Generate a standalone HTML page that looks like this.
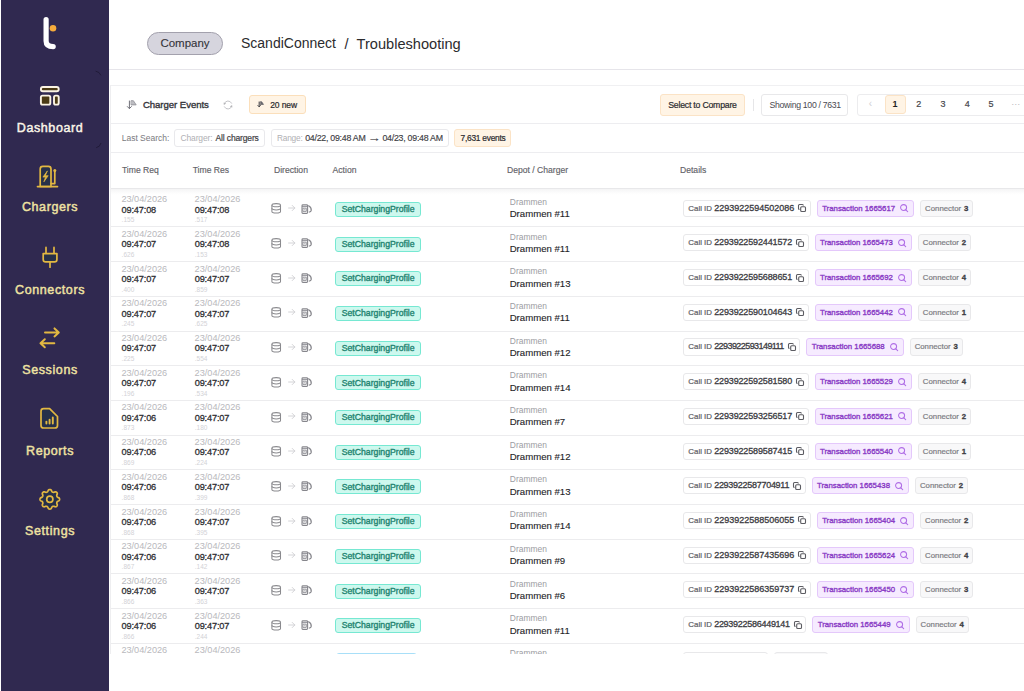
<!DOCTYPE html><html><head><meta charset="utf-8"><style>
*{box-sizing:border-box;margin:0;padding:0}
html,body{width:1024px;height:691px;overflow:hidden;background:#fff;font-family:"Liberation Sans",sans-serif;position:relative}
.abs{position:absolute}
.t{position:absolute;white-space:nowrap}
svg{position:absolute;overflow:visible}
#side{position:absolute;left:1px;top:0;width:108px;height:691px;background:#302950}
#clip{position:absolute;left:110px;top:85px;width:914px;height:569px;overflow:hidden}
.cid,.trx,.con{position:relative;height:17.2px;border:1px solid #e8e8ea;border-radius:3px;white-space:nowrap;line-height:15.2px}
.cid{background:#fff;font-size:7.9px;color:#5e5e64;-webkit-text-stroke:0.2px #5e5e64;padding:0 15.6px 0 4.3px}
.cid b{font-size:9px;color:#3c3c42;font-weight:normal;-webkit-text-stroke:0.3px #3c3c42;letter-spacing:0.05px}
.cp{position:absolute;right:3.5px;top:3.6px;width:8px;height:8px}
.trx{background:#f6ebff;border-color:#e4c8fb;color:#8a3cc6;font-size:7.8px;-webkit-text-stroke:0.35px #8a3cc6;padding:0 18px 0 4.4px;letter-spacing:0px}
.sr{position:absolute;right:4.6px;top:3.7px;width:8.2px;height:8px}
.n1{margin:0 -1.1px}
.con{background:#f8f8f9;color:#7c7c82;-webkit-text-stroke:0.2px #7c7c82;font-size:7.8px;padding:0 4.2px 0 4.1px}
.con b{color:#3e3e44;margin-left:0.7px;-webkit-text-stroke:0.3px #3e3e44}
</style></head><body>
<div id="side"></div>
<svg style="left:0;top:0" width="108" height="60"><path d="M46.1 19.5 V41 Q46.1 46.6 53.2 46.6" fill="none" stroke="#fff" stroke-width="5.2" stroke-linecap="round"/><circle cx="53" cy="28.3" r="3.3" fill="#f6ab3c"/></svg>
<svg style="left:0;top:0" width="108" height="120"><g fill="#4b3a14" stroke="#fbf3e3" stroke-width="1.9"><rect x="40.9" y="87" width="17.8" height="4.3" rx="2"/><rect x="40.9" y="95.6" width="9.4" height="9" rx="1.6"/><rect x="54" y="95.6" width="4.7" height="9" rx="1.6"/></g></svg>
<svg style="left:0;top:0" width="108" height="200"><g stroke="#e2b842" stroke-width="1.7" fill="none" stroke-linecap="round" stroke-linejoin="round"><path d="M40.2 186.5 V169 Q40.2 166.4 42.8 166.4 H48.4 Q51 166.4 51 169 V186.5 Z" fill="#26304a"/><path d="M37.5 186.6 H57.5"/><path d="M51 183.6 H54.8 V170.8"/><path d="M47.2 171.2 L42.9 177.1 H45.5 L43.9 181.8 L48.2 175.7 H45.6 Z" fill="#e2b842" stroke-width="0.7"/></g><circle cx="54.8" cy="170.4" r="1.5" fill="#e2b842"/></svg>
<svg style="left:0;top:0" width="108" height="280"><g stroke="#e2b842" stroke-width="1.7" fill="none" stroke-linecap="round" stroke-linejoin="round"><path d="M46 247.4 V253.4 M54 247.4 V253.4"/><path d="M43.2 253.6 H56.9 V259.5 Q56.9 261.9 54.5 261.9 H45.6 Q43.2 261.9 43.2 259.5 Z" fill="#26304a"/><path d="M50 262 V267.2"/></g></svg>
<svg style="left:0;top:0" width="108" height="360"><g stroke="#e2b842" stroke-width="2" fill="none" stroke-linecap="round" stroke-linejoin="round"><path d="M45 332.4 H58.6 M54.5 328.4 L58.8 332.4 L54.5 336.4"/><path d="M54.3 343.2 H40.7 M44.8 339.2 L40.5 343.2 L44.8 347.2"/></g></svg>
<svg style="left:0;top:0" width="108" height="440"><path d="M43.6 408.6 H49.6 L57.5 416.5 V425.4 Q57.5 428 54.9 428 H43.6 Q41 428 41 425.4 V411.2 Q41 408.6 43.6 408.6 Z" fill="#26304a" stroke="#e2b842" stroke-width="1.7" stroke-linejoin="round"/><g stroke="#e2b842" stroke-width="1.9" stroke-linecap="round"><path d="M46.4 423.6 V421.6 M49.6 423.6 V419.6 M52.8 423.6 V417.4"/></g></svg>
<svg style="left:0;top:0" width="108" height="520"><path d="M49.80 489.50 L50.18 489.54 L50.56 489.66 L50.92 489.85 L51.25 490.15 L51.51 490.72 L51.72 491.30 L51.97 491.61 L52.22 491.86 L52.48 492.05 L52.75 492.19 L53.04 492.28 L53.35 492.33 L53.70 492.33 L54.10 492.28 L54.66 492.02 L55.25 491.80 L55.69 491.83 L56.08 491.94 L56.43 492.13 L56.73 492.37 L56.97 492.67 L57.16 493.02 L57.27 493.41 L57.30 493.85 L57.08 494.44 L56.82 495.00 L56.77 495.40 L56.77 495.75 L56.82 496.06 L56.91 496.35 L57.05 496.62 L57.24 496.88 L57.49 497.13 L57.80 497.38 L58.38 497.59 L58.95 497.85 L59.25 498.18 L59.44 498.54 L59.56 498.92 L59.60 499.30 L59.56 499.68 L59.44 500.06 L59.25 500.42 L58.95 500.75 L58.38 501.01 L57.80 501.22 L57.49 501.47 L57.24 501.72 L57.05 501.98 L56.91 502.25 L56.82 502.54 L56.77 502.85 L56.77 503.20 L56.82 503.60 L57.08 504.16 L57.30 504.75 L57.27 505.19 L57.16 505.58 L56.97 505.93 L56.73 506.23 L56.43 506.47 L56.08 506.66 L55.69 506.77 L55.25 506.80 L54.66 506.58 L54.10 506.32 L53.70 506.27 L53.35 506.27 L53.04 506.32 L52.75 506.41 L52.48 506.55 L52.22 506.74 L51.97 506.99 L51.72 507.30 L51.51 507.88 L51.25 508.45 L50.92 508.75 L50.56 508.94 L50.18 509.06 L49.80 509.10 L49.42 509.06 L49.04 508.94 L48.68 508.75 L48.35 508.45 L48.09 507.88 L47.88 507.30 L47.63 506.99 L47.38 506.74 L47.12 506.55 L46.85 506.41 L46.56 506.32 L46.25 506.27 L45.90 506.27 L45.50 506.32 L44.94 506.58 L44.35 506.80 L43.91 506.77 L43.52 506.66 L43.17 506.47 L42.87 506.23 L42.63 505.93 L42.44 505.58 L42.33 505.19 L42.30 504.75 L42.52 504.16 L42.78 503.60 L42.83 503.20 L42.83 502.85 L42.78 502.54 L42.69 502.25 L42.55 501.98 L42.36 501.72 L42.11 501.47 L41.80 501.22 L41.22 501.01 L40.65 500.75 L40.35 500.42 L40.16 500.06 L40.04 499.68 L40.00 499.30 L40.04 498.92 L40.16 498.54 L40.35 498.18 L40.65 497.85 L41.22 497.59 L41.80 497.38 L42.11 497.13 L42.36 496.88 L42.55 496.62 L42.69 496.35 L42.78 496.06 L42.83 495.75 L42.83 495.40 L42.78 495.00 L42.52 494.44 L42.30 493.85 L42.33 493.41 L42.44 493.02 L42.63 492.67 L42.87 492.37 L43.17 492.13 L43.52 491.94 L43.91 491.83 L44.35 491.80 L44.94 492.02 L45.50 492.28 L45.90 492.33 L46.25 492.33 L46.56 492.28 L46.85 492.19 L47.12 492.05 L47.38 491.86 L47.63 491.61 L47.88 491.30 L48.09 490.72 L48.35 490.15 L48.68 489.85 L49.04 489.66 L49.42 489.54 Z" fill="#26304a" stroke="#e2b842" stroke-width="1.7" stroke-linejoin="round"/><circle cx="49.8" cy="499.3" r="3.1" fill="none" stroke="#e2b842" stroke-width="1.7"/></svg>
<svg style="left:0;top:0" width="108" height="160"><g fill="none" stroke="#1f1a36" stroke-width="0.9" stroke-linecap="round"><path d="M96 71.2 Q99.6 71.8 100.8 75"/><path d="M96.6 147.6 Q100 147 100.9 143.4"/></g></svg>
<div class="t" style="left:0.00px;top:121.06px;font-size:12.5px;line-height:15.62px;width:100.1px;text-align:center;letter-spacing:0.6px;-webkit-text-stroke:0.45px #fbf5e8;color:#fbf5e8">Dashboard</div>
<div class="t" style="left:0.00px;top:199.86px;font-size:12.5px;line-height:15.62px;width:100.1px;text-align:center;letter-spacing:0.6px;-webkit-text-stroke:0.45px #efe2a2;color:#efe2a2">Chargers</div>
<div class="t" style="left:0.00px;top:282.86px;font-size:12.5px;line-height:15.62px;width:100.1px;text-align:center;letter-spacing:0.6px;-webkit-text-stroke:0.45px #efe2a2;color:#efe2a2">Connectors</div>
<div class="t" style="left:0.00px;top:362.86px;font-size:12.5px;line-height:15.62px;width:100.1px;text-align:center;letter-spacing:0.6px;-webkit-text-stroke:0.45px #efe2a2;color:#efe2a2">Sessions</div>
<div class="t" style="left:0.00px;top:444.06px;font-size:12.5px;line-height:15.62px;width:100.1px;text-align:center;letter-spacing:0.6px;-webkit-text-stroke:0.45px #efe2a2;color:#efe2a2">Reports</div>
<div class="t" style="left:0.00px;top:523.96px;font-size:12.5px;line-height:15.62px;width:100.1px;text-align:center;letter-spacing:0.6px;-webkit-text-stroke:0.45px #efe2a2;color:#efe2a2">Settings</div>
<div class="abs" style="left:147.00px;top:32.00px;width:76.00px;height:23.00px;border:1px solid #a3a1ad;background:#d6d5de;border-radius:12px"></div>
<div class="t" style="left:147.00px;top:35.53px;font-size:11.5px;line-height:14.38px;width:76px;text-align:center;color:#333339;-webkit-text-stroke:0.1px #333339">Company</div>
<div class="t" style="left:241.00px;top:35.10px;font-size:14.0px;line-height:17.5px;color:#2b2b2e">ScandiConnect</div>
<div class="t" style="left:344.60px;top:34.52px;font-size:14.6px;line-height:18.25px;color:#2b2b2e">/</div>
<div class="t" style="left:356.60px;top:34.52px;font-size:14.6px;line-height:18.25px;color:#2b2b2e">Troubleshooting</div>
<div class="abs" style="left:109.00px;top:69.00px;width:915.00px;height:1.00px;background:#e6e5ea"></div>
<div id="clip">
<div class="abs" style="left:0.00px;top:37.60px;width:914.00px;height:1.00px;background:#ededf0"></div>
<svg style="left:16.00px;top:15.00px" width="11" height="10" viewBox="0 0 11 10"><g stroke-linecap="round" stroke-linejoin="round"><path d="M3.4 1 V8.4 M1.4 6.6 L3.4 8.6 L5.4 6.6" fill="none" stroke="#707078" stroke-width="1"/><path d="M5.4 0.7 H7.4 L10.2 4.9 H5.4 Z" fill="#bdbdc2" stroke="#8e8e96" stroke-width="0.8"/></g></svg>
<div class="t" style="left:32.90px;top:13.97px;font-size:9.6px;line-height:12.0px;color:#34343a;letter-spacing:-0.05px;-webkit-text-stroke:0.35px #34343a">Charger Events</div>
<svg style="left:112.50px;top:14.50px" width="10" height="10" viewBox="0 0 10 10"><g fill="none" stroke="#c4c4c8" stroke-width="1" stroke-linecap="round"><path d="M1.3 3.6 A4 4 0 0 1 8.6 3.2"/><path d="M8.7 6.4 A4 4 0 0 1 1.4 6.8"/></g><path d="M0.6 2.4 L3.2 3.6 L0.9 5 Z" fill="#b4b4b8"/><path d="M9.4 7.6 L6.8 6.4 L9.1 5 Z" fill="#b4b4b8"/></svg>
<div class="abs" style="left:139.10px;top:10.40px;width:57.00px;height:18.50px;background:#fff4e5;border:1px solid #fbdfbb;border-radius:3px"></div>
<svg style="left:147.20px;top:16.20px" width="7" height="7" viewBox="0 0 11 10"><g stroke-linecap="round" stroke-linejoin="round"><path d="M3.4 1 V8.4 M1.4 6.6 L3.4 8.6 L5.4 6.6" fill="none" stroke="#3a3a40" stroke-width="1.5"/><path d="M5.4 0.7 H7.4 L10.2 4.9 H5.4 Z" fill="#6a6a70" stroke="#55555c" stroke-width="1"/></g></svg>
<div class="t" style="left:160.20px;top:14.54px;font-size:8.5px;line-height:10.62px;color:#2a2a2e;letter-spacing:-0.1px;-webkit-text-stroke:0.2px #2a2a2e">20 new</div>
<div class="abs" style="left:549.80px;top:8.80px;width:85.50px;height:22.00px;background:#fff4e5;border:1px solid #fbe3c6;border-radius:3px"></div>
<div class="t" style="left:558.20px;top:15.15px;font-size:8.7px;line-height:10.88px;color:#2a2a2e;letter-spacing:-0.2px;-webkit-text-stroke:0.2px #2a2a2e">Select to Compare</div>
<div class="abs" style="left:642.50px;top:13.80px;width:1.00px;height:12.50px;background:#e6e6e8"></div>
<div class="abs" style="left:651.30px;top:8.80px;width:87.00px;height:22.00px;background:#fff;border:1px solid #e8e8ea;border-radius:3px"></div>
<div class="t" style="left:659.50px;top:15.15px;font-size:8.7px;line-height:10.88px;color:#4a4a50;letter-spacing:-0.3px">Showing 100 / 7631</div>
<div class="abs" style="left:747.10px;top:9.20px;width:200.00px;height:21.50px;background:#fff;border:1px solid #ececee;border-radius:3px"></div>
<div class="t" style="left:758.80px;top:13.29px;font-size:10px;line-height:12.5px;color:#cfcfd4">&lsaquo;</div>
<div class="abs" style="left:774.50px;top:10.20px;width:21.60px;height:18.70px;background:#fff4e5;border:1px solid #fbe3c6;border-radius:3px"></div>
<div class="t" style="left:779.00px;top:14.36px;font-size:9px;line-height:11.25px;text-align:center;width:12px;color:#1e1e22;font-weight:bold">1</div>
<div class="t" style="left:802.80px;top:14.36px;font-size:9px;line-height:11.25px;text-align:center;width:12px;color:#46464c;-webkit-text-stroke:0.2px #46464c">2</div>
<div class="t" style="left:827.10px;top:14.36px;font-size:9px;line-height:11.25px;text-align:center;width:12px;color:#46464c;-webkit-text-stroke:0.2px #46464c">3</div>
<div class="t" style="left:851.20px;top:14.36px;font-size:9px;line-height:11.25px;text-align:center;width:12px;color:#46464c;-webkit-text-stroke:0.2px #46464c">4</div>
<div class="t" style="left:875.00px;top:14.36px;font-size:9px;line-height:11.25px;text-align:center;width:12px;color:#46464c;-webkit-text-stroke:0.2px #46464c">5</div>
<div class="t" style="left:901.30px;top:13.86px;font-size:9px;line-height:11.25px;color:#b8b8bc">&middot;&middot;&middot;</div>
<div class="abs" style="left:0.00px;top:67.00px;width:914.00px;height:1.00px;background:#ededf0"></div>
<div class="t" style="left:11.70px;top:47.84px;font-size:8.5px;line-height:10.62px;color:#7a7a80">Last Search:</div>
<div class="abs" style="left:64.20px;top:44.20px;width:90.70px;height:17.50px;background:#fff;border:1px solid #e9e9ec;border-radius:3px"></div>
<div class="t" style="left:70.50px;top:47.84px;font-size:8.5px;line-height:10.62px;color:#b0b0b4;letter-spacing:-0.15px">Charger:</div>
<div class="t" style="left:105.60px;top:47.84px;font-size:8.5px;line-height:10.62px;color:#3e3e44;letter-spacing:-0.15px;-webkit-text-stroke:0.2px #3e3e44">All chargers</div>
<div class="abs" style="left:160.60px;top:44.20px;width:178.00px;height:17.50px;background:#fff;border:1px solid #e9e9ec;border-radius:3px"></div>
<div class="t" style="left:167.00px;top:48.03px;font-size:8.3px;line-height:10.38px;color:#b0b0b4;letter-spacing:-0.2px">Range:</div>
<div class="t" style="left:195.20px;top:47.55px;font-size:8.8px;line-height:11.0px;color:#3e3e44;letter-spacing:-0.25px;-webkit-text-stroke:0.15px #3e3e44">04/22, 09:48 AM <span style="display:inline-block;transform:scaleX(1.5);margin:0 2px">&rarr;</span> 04/23, 09:48 AM</div>
<div class="abs" style="left:344.20px;top:44.20px;width:57.00px;height:17.50px;background:#fff4e5;border:1px solid #fbe3c6;border-radius:3px"></div>
<div class="t" style="left:350.50px;top:47.94px;font-size:8.4px;line-height:10.5px;color:#2a2a2e;letter-spacing:-0.25px;-webkit-text-stroke:0.2px #2a2a2e">7,631 events</div>
<div class="abs" style="left:0.00px;top:103.00px;width:914.00px;height:1.00px;background:#e8e8ea"></div>
<div class="abs" style="left:0.00px;top:104.00px;width:914.00px;height:6.00px;background:linear-gradient(#f4f4f5,#fdfdfd 70%,rgba(255,255,255,0))"></div>
<div class="t" style="left:11.90px;top:79.85px;font-size:8.6px;line-height:10.75px;color:#626268;-webkit-text-stroke:0.15px #626268">Time Req</div>
<div class="t" style="left:82.70px;top:79.85px;font-size:8.6px;line-height:10.75px;color:#626268;-webkit-text-stroke:0.15px #626268">Time Res</div>
<div class="t" style="left:164.00px;top:79.85px;font-size:8.6px;line-height:10.75px;color:#626268;-webkit-text-stroke:0.15px #626268">Direction</div>
<div class="t" style="left:222.60px;top:79.85px;font-size:8.6px;line-height:10.75px;color:#626268;-webkit-text-stroke:0.15px #626268">Action</div>
<div class="t" style="left:397.00px;top:79.85px;font-size:8.6px;line-height:10.75px;color:#626268;-webkit-text-stroke:0.15px #626268">Depot / Charger</div>
<div class="t" style="left:570.00px;top:79.85px;font-size:8.6px;line-height:10.75px;color:#626268;-webkit-text-stroke:0.15px #626268">Details</div>
<div class="abs" style="left:0.00px;top:141.40px;width:914.00px;height:1.00px;background:#ececee"></div>
<div class="t" style="left:11.40px;top:109.26px;font-size:9.2px;line-height:11.5px;color:#b9b9bd;letter-spacing:-0.02px">23/04/2026</div>
<div class="t" style="left:84.60px;top:109.26px;font-size:9.2px;line-height:11.5px;color:#b9b9bd;letter-spacing:-0.02px">23/04/2026</div>
<div class="t" style="left:399.80px;top:111.89px;font-size:8.45px;line-height:10.56px;color:#9c9ca2">Drammen</div>
<div class="t" style="left:11.50px;top:119.56px;font-size:9.2px;line-height:11.5px;color:#2e2e32;letter-spacing:-0.15px;-webkit-text-stroke:0.28px #2e2e32">09:47:08</div>
<div class="t" style="left:11.60px;top:131.29px;font-size:6.5px;line-height:8.12px;color:#d2d2d6">.155</div>
<div class="t" style="left:84.70px;top:119.56px;font-size:9.2px;line-height:11.5px;color:#2e2e32;letter-spacing:-0.15px;-webkit-text-stroke:0.28px #2e2e32">09:47:08</div>
<div class="t" style="left:84.80px;top:131.29px;font-size:6.5px;line-height:8.12px;color:#d2d2d6">.517</div>
<svg style="left:160.90px;top:118.30px" width="11" height="11" viewBox="0 0 11 11"><g fill="none" stroke="#8a8a8e" stroke-width="1.05"><ellipse cx="5.2" cy="2.2" rx="4.3" ry="1.6"/><path d="M0.9 2.2 V8.4 Q0.9 10 5.2 10 Q9.5 10 9.5 8.4 V2.2"/><path d="M0.9 5.3 Q0.9 6.9 5.2 6.9 Q9.5 6.9 9.5 5.3"/></g></svg>
<svg style="left:177.60px;top:119.20px" width="8" height="8" viewBox="0 0 8 8"><g fill="none" stroke="#cfcfd2" stroke-width="0.9" stroke-linecap="round" stroke-linejoin="round"><path d="M0.6 4 H6.8 M4.2 1.4 L6.8 4 L4.2 6.6"/></g></svg>
<svg style="left:191.20px;top:118.50px" width="12" height="11" viewBox="0 0 12 11"><g fill="none" stroke="#86868c" stroke-linejoin="round" stroke-linecap="round"><rect x="1" y="0.9" width="5.6" height="8.5" rx="0.9" stroke-width="1.1"/><path d="M1.4 2.6 H6.2" stroke-width="0.9"/><rect x="2.3" y="4.2" width="3" height="3.2" stroke-width="0.85"/><path d="M7.6 1.8 Q10.6 3.6 10.2 6.4 Q9.9 7.9 8.4 8" stroke-width="1.25"/></g><rect x="3.3" y="5.3" width="1" height="1" fill="#86868c"/></svg>
<div class="abs" style="left:225.00px;top:116.80px;width:86.00px;height:15.00px;background:#cdf8ee;border:1px solid #76e8d2;border-radius:3px"></div>
<div class="t" style="left:231.70px;top:119.05px;font-size:8.7px;line-height:10.88px;color:#1f8470;-webkit-text-stroke:0.35px #1f8470">SetChargingProfile</div>
<div class="t" style="left:399.70px;top:123.17px;font-size:9.6px;line-height:12.0px;color:#232327;-webkit-text-stroke:0.12px #232327">Drammen #11</div>
<div class="abs" style="left:573.00px;top:114.60px;display:flex;gap:5.9px;height:17.2px"><div class="cid">Call ID&nbsp;<b><span style="letter-spacing:0.00px">2293922594502086</span></b><svg class="cp" viewBox="0 0 8 8"><g fill="none" stroke="#5c5c62" stroke-width="1.1"><rect x="2.7" y="2.7" width="4.8" height="4.8" rx="1"/><path d="M1.5 5.4 Q0.5 5.4 0.5 4.4 V1.5 Q0.5 0.5 1.5 0.5 H4.4 Q5.4 0.5 5.4 1.5"/></g></svg></div><div class="trx">Transaction 1665617<svg class="sr" viewBox="0 0 8.2 8"><g fill="none" stroke="#b06ee6" stroke-width="1.05" stroke-linecap="round"><circle cx="3.6" cy="3.6" r="3"/><path d="M5.8 5.8 L7.7 7.6"/></g></svg></div><div class="con">Connector <b>3</b></div></div>
<div class="abs" style="left:0.00px;top:176.10px;width:914.00px;height:1.00px;background:#ececee"></div>
<div class="t" style="left:11.40px;top:143.96px;font-size:9.2px;line-height:11.5px;color:#b9b9bd;letter-spacing:-0.02px">23/04/2026</div>
<div class="t" style="left:84.60px;top:143.96px;font-size:9.2px;line-height:11.5px;color:#b9b9bd;letter-spacing:-0.02px">23/04/2026</div>
<div class="t" style="left:399.80px;top:146.59px;font-size:8.45px;line-height:10.56px;color:#9c9ca2">Drammen</div>
<div class="t" style="left:11.50px;top:154.26px;font-size:9.2px;line-height:11.5px;color:#2e2e32;letter-spacing:-0.15px;-webkit-text-stroke:0.28px #2e2e32">09:47:07</div>
<div class="t" style="left:11.60px;top:165.99px;font-size:6.5px;line-height:8.12px;color:#d2d2d6">.626</div>
<div class="t" style="left:84.70px;top:154.26px;font-size:9.2px;line-height:11.5px;color:#2e2e32;letter-spacing:-0.15px;-webkit-text-stroke:0.28px #2e2e32">09:47:08</div>
<div class="t" style="left:84.80px;top:165.99px;font-size:6.5px;line-height:8.12px;color:#d2d2d6">.153</div>
<svg style="left:160.90px;top:153.00px" width="11" height="11" viewBox="0 0 11 11"><g fill="none" stroke="#8a8a8e" stroke-width="1.05"><ellipse cx="5.2" cy="2.2" rx="4.3" ry="1.6"/><path d="M0.9 2.2 V8.4 Q0.9 10 5.2 10 Q9.5 10 9.5 8.4 V2.2"/><path d="M0.9 5.3 Q0.9 6.9 5.2 6.9 Q9.5 6.9 9.5 5.3"/></g></svg>
<svg style="left:177.60px;top:153.90px" width="8" height="8" viewBox="0 0 8 8"><g fill="none" stroke="#cfcfd2" stroke-width="0.9" stroke-linecap="round" stroke-linejoin="round"><path d="M0.6 4 H6.8 M4.2 1.4 L6.8 4 L4.2 6.6"/></g></svg>
<svg style="left:191.20px;top:153.20px" width="12" height="11" viewBox="0 0 12 11"><g fill="none" stroke="#86868c" stroke-linejoin="round" stroke-linecap="round"><rect x="1" y="0.9" width="5.6" height="8.5" rx="0.9" stroke-width="1.1"/><path d="M1.4 2.6 H6.2" stroke-width="0.9"/><rect x="2.3" y="4.2" width="3" height="3.2" stroke-width="0.85"/><path d="M7.6 1.8 Q10.6 3.6 10.2 6.4 Q9.9 7.9 8.4 8" stroke-width="1.25"/></g><rect x="3.3" y="5.3" width="1" height="1" fill="#86868c"/></svg>
<div class="abs" style="left:225.00px;top:151.50px;width:86.00px;height:15.00px;background:#cdf8ee;border:1px solid #76e8d2;border-radius:3px"></div>
<div class="t" style="left:231.70px;top:153.75px;font-size:8.7px;line-height:10.88px;color:#1f8470;-webkit-text-stroke:0.35px #1f8470">SetChargingProfile</div>
<div class="t" style="left:399.70px;top:157.87px;font-size:9.6px;line-height:12.0px;color:#232327;-webkit-text-stroke:0.12px #232327">Drammen #11</div>
<div class="abs" style="left:573.00px;top:149.30px;display:flex;gap:5.9px;height:17.2px"><div class="cid">Call ID&nbsp;<b><span style="letter-spacing:-0.14px">2293922592441572</span></b><svg class="cp" viewBox="0 0 8 8"><g fill="none" stroke="#5c5c62" stroke-width="1.1"><rect x="2.7" y="2.7" width="4.8" height="4.8" rx="1"/><path d="M1.5 5.4 Q0.5 5.4 0.5 4.4 V1.5 Q0.5 0.5 1.5 0.5 H4.4 Q5.4 0.5 5.4 1.5"/></g></svg></div><div class="trx">Transaction 1665473<svg class="sr" viewBox="0 0 8.2 8"><g fill="none" stroke="#b06ee6" stroke-width="1.05" stroke-linecap="round"><circle cx="3.6" cy="3.6" r="3"/><path d="M5.8 5.8 L7.7 7.6"/></g></svg></div><div class="con">Connector <b>2</b></div></div>
<div class="abs" style="left:0.00px;top:210.80px;width:914.00px;height:1.00px;background:#ececee"></div>
<div class="t" style="left:11.40px;top:178.66px;font-size:9.2px;line-height:11.5px;color:#b9b9bd;letter-spacing:-0.02px">23/04/2026</div>
<div class="t" style="left:84.60px;top:178.66px;font-size:9.2px;line-height:11.5px;color:#b9b9bd;letter-spacing:-0.02px">23/04/2026</div>
<div class="t" style="left:399.80px;top:181.29px;font-size:8.45px;line-height:10.56px;color:#9c9ca2">Drammen</div>
<div class="t" style="left:11.50px;top:188.96px;font-size:9.2px;line-height:11.5px;color:#2e2e32;letter-spacing:-0.15px;-webkit-text-stroke:0.28px #2e2e32">09:47:07</div>
<div class="t" style="left:11.60px;top:200.69px;font-size:6.5px;line-height:8.12px;color:#d2d2d6">.400</div>
<div class="t" style="left:84.70px;top:188.96px;font-size:9.2px;line-height:11.5px;color:#2e2e32;letter-spacing:-0.15px;-webkit-text-stroke:0.28px #2e2e32">09:47:07</div>
<div class="t" style="left:84.80px;top:200.69px;font-size:6.5px;line-height:8.12px;color:#d2d2d6">.859</div>
<svg style="left:160.90px;top:187.70px" width="11" height="11" viewBox="0 0 11 11"><g fill="none" stroke="#8a8a8e" stroke-width="1.05"><ellipse cx="5.2" cy="2.2" rx="4.3" ry="1.6"/><path d="M0.9 2.2 V8.4 Q0.9 10 5.2 10 Q9.5 10 9.5 8.4 V2.2"/><path d="M0.9 5.3 Q0.9 6.9 5.2 6.9 Q9.5 6.9 9.5 5.3"/></g></svg>
<svg style="left:177.60px;top:188.60px" width="8" height="8" viewBox="0 0 8 8"><g fill="none" stroke="#cfcfd2" stroke-width="0.9" stroke-linecap="round" stroke-linejoin="round"><path d="M0.6 4 H6.8 M4.2 1.4 L6.8 4 L4.2 6.6"/></g></svg>
<svg style="left:191.20px;top:187.90px" width="12" height="11" viewBox="0 0 12 11"><g fill="none" stroke="#86868c" stroke-linejoin="round" stroke-linecap="round"><rect x="1" y="0.9" width="5.6" height="8.5" rx="0.9" stroke-width="1.1"/><path d="M1.4 2.6 H6.2" stroke-width="0.9"/><rect x="2.3" y="4.2" width="3" height="3.2" stroke-width="0.85"/><path d="M7.6 1.8 Q10.6 3.6 10.2 6.4 Q9.9 7.9 8.4 8" stroke-width="1.25"/></g><rect x="3.3" y="5.3" width="1" height="1" fill="#86868c"/></svg>
<div class="abs" style="left:225.00px;top:186.20px;width:86.00px;height:15.00px;background:#cdf8ee;border:1px solid #76e8d2;border-radius:3px"></div>
<div class="t" style="left:231.70px;top:188.45px;font-size:8.7px;line-height:10.88px;color:#1f8470;-webkit-text-stroke:0.35px #1f8470">SetChargingProfile</div>
<div class="t" style="left:399.70px;top:192.57px;font-size:9.6px;line-height:12.0px;color:#232327;-webkit-text-stroke:0.12px #232327">Drammen #13</div>
<div class="abs" style="left:573.00px;top:184.00px;display:flex;gap:5.9px;height:17.2px"><div class="cid">Call ID&nbsp;<b><span style="letter-spacing:-0.14px">2293922595688651</span></b><svg class="cp" viewBox="0 0 8 8"><g fill="none" stroke="#5c5c62" stroke-width="1.1"><rect x="2.7" y="2.7" width="4.8" height="4.8" rx="1"/><path d="M1.5 5.4 Q0.5 5.4 0.5 4.4 V1.5 Q0.5 0.5 1.5 0.5 H4.4 Q5.4 0.5 5.4 1.5"/></g></svg></div><div class="trx">Transaction 1665692<svg class="sr" viewBox="0 0 8.2 8"><g fill="none" stroke="#b06ee6" stroke-width="1.05" stroke-linecap="round"><circle cx="3.6" cy="3.6" r="3"/><path d="M5.8 5.8 L7.7 7.6"/></g></svg></div><div class="con">Connector <b>4</b></div></div>
<div class="abs" style="left:0.00px;top:245.50px;width:914.00px;height:1.00px;background:#ececee"></div>
<div class="t" style="left:11.40px;top:213.36px;font-size:9.2px;line-height:11.5px;color:#b9b9bd;letter-spacing:-0.02px">23/04/2026</div>
<div class="t" style="left:84.60px;top:213.36px;font-size:9.2px;line-height:11.5px;color:#b9b9bd;letter-spacing:-0.02px">23/04/2026</div>
<div class="t" style="left:399.80px;top:215.99px;font-size:8.45px;line-height:10.56px;color:#9c9ca2">Drammen</div>
<div class="t" style="left:11.50px;top:223.66px;font-size:9.2px;line-height:11.5px;color:#2e2e32;letter-spacing:-0.15px;-webkit-text-stroke:0.28px #2e2e32">09:47:07</div>
<div class="t" style="left:11.60px;top:235.39px;font-size:6.5px;line-height:8.12px;color:#d2d2d6">.245</div>
<div class="t" style="left:84.70px;top:223.66px;font-size:9.2px;line-height:11.5px;color:#2e2e32;letter-spacing:-0.15px;-webkit-text-stroke:0.28px #2e2e32">09:47:07</div>
<div class="t" style="left:84.80px;top:235.39px;font-size:6.5px;line-height:8.12px;color:#d2d2d6">.625</div>
<svg style="left:160.90px;top:222.40px" width="11" height="11" viewBox="0 0 11 11"><g fill="none" stroke="#8a8a8e" stroke-width="1.05"><ellipse cx="5.2" cy="2.2" rx="4.3" ry="1.6"/><path d="M0.9 2.2 V8.4 Q0.9 10 5.2 10 Q9.5 10 9.5 8.4 V2.2"/><path d="M0.9 5.3 Q0.9 6.9 5.2 6.9 Q9.5 6.9 9.5 5.3"/></g></svg>
<svg style="left:177.60px;top:223.30px" width="8" height="8" viewBox="0 0 8 8"><g fill="none" stroke="#cfcfd2" stroke-width="0.9" stroke-linecap="round" stroke-linejoin="round"><path d="M0.6 4 H6.8 M4.2 1.4 L6.8 4 L4.2 6.6"/></g></svg>
<svg style="left:191.20px;top:222.60px" width="12" height="11" viewBox="0 0 12 11"><g fill="none" stroke="#86868c" stroke-linejoin="round" stroke-linecap="round"><rect x="1" y="0.9" width="5.6" height="8.5" rx="0.9" stroke-width="1.1"/><path d="M1.4 2.6 H6.2" stroke-width="0.9"/><rect x="2.3" y="4.2" width="3" height="3.2" stroke-width="0.85"/><path d="M7.6 1.8 Q10.6 3.6 10.2 6.4 Q9.9 7.9 8.4 8" stroke-width="1.25"/></g><rect x="3.3" y="5.3" width="1" height="1" fill="#86868c"/></svg>
<div class="abs" style="left:225.00px;top:220.90px;width:86.00px;height:15.00px;background:#cdf8ee;border:1px solid #76e8d2;border-radius:3px"></div>
<div class="t" style="left:231.70px;top:223.15px;font-size:8.7px;line-height:10.88px;color:#1f8470;-webkit-text-stroke:0.35px #1f8470">SetChargingProfile</div>
<div class="t" style="left:399.70px;top:227.27px;font-size:9.6px;line-height:12.0px;color:#232327;-webkit-text-stroke:0.12px #232327">Drammen #11</div>
<div class="abs" style="left:573.00px;top:218.70px;display:flex;gap:5.9px;height:17.2px"><div class="cid">Call ID&nbsp;<b><span style="letter-spacing:-0.14px">2293922590104643</span></b><svg class="cp" viewBox="0 0 8 8"><g fill="none" stroke="#5c5c62" stroke-width="1.1"><rect x="2.7" y="2.7" width="4.8" height="4.8" rx="1"/><path d="M1.5 5.4 Q0.5 5.4 0.5 4.4 V1.5 Q0.5 0.5 1.5 0.5 H4.4 Q5.4 0.5 5.4 1.5"/></g></svg></div><div class="trx">Transaction 1665442<svg class="sr" viewBox="0 0 8.2 8"><g fill="none" stroke="#b06ee6" stroke-width="1.05" stroke-linecap="round"><circle cx="3.6" cy="3.6" r="3"/><path d="M5.8 5.8 L7.7 7.6"/></g></svg></div><div class="con">Connector <b>1</b></div></div>
<div class="abs" style="left:0.00px;top:280.20px;width:914.00px;height:1.00px;background:#ececee"></div>
<div class="t" style="left:11.40px;top:248.06px;font-size:9.2px;line-height:11.5px;color:#b9b9bd;letter-spacing:-0.02px">23/04/2026</div>
<div class="t" style="left:84.60px;top:248.06px;font-size:9.2px;line-height:11.5px;color:#b9b9bd;letter-spacing:-0.02px">23/04/2026</div>
<div class="t" style="left:399.80px;top:250.69px;font-size:8.45px;line-height:10.56px;color:#9c9ca2">Drammen</div>
<div class="t" style="left:11.50px;top:258.36px;font-size:9.2px;line-height:11.5px;color:#2e2e32;letter-spacing:-0.15px;-webkit-text-stroke:0.28px #2e2e32">09:47:07</div>
<div class="t" style="left:11.60px;top:270.09px;font-size:6.5px;line-height:8.12px;color:#d2d2d6">.225</div>
<div class="t" style="left:84.70px;top:258.36px;font-size:9.2px;line-height:11.5px;color:#2e2e32;letter-spacing:-0.15px;-webkit-text-stroke:0.28px #2e2e32">09:47:07</div>
<div class="t" style="left:84.80px;top:270.09px;font-size:6.5px;line-height:8.12px;color:#d2d2d6">.554</div>
<svg style="left:160.90px;top:257.10px" width="11" height="11" viewBox="0 0 11 11"><g fill="none" stroke="#8a8a8e" stroke-width="1.05"><ellipse cx="5.2" cy="2.2" rx="4.3" ry="1.6"/><path d="M0.9 2.2 V8.4 Q0.9 10 5.2 10 Q9.5 10 9.5 8.4 V2.2"/><path d="M0.9 5.3 Q0.9 6.9 5.2 6.9 Q9.5 6.9 9.5 5.3"/></g></svg>
<svg style="left:177.60px;top:258.00px" width="8" height="8" viewBox="0 0 8 8"><g fill="none" stroke="#cfcfd2" stroke-width="0.9" stroke-linecap="round" stroke-linejoin="round"><path d="M0.6 4 H6.8 M4.2 1.4 L6.8 4 L4.2 6.6"/></g></svg>
<svg style="left:191.20px;top:257.30px" width="12" height="11" viewBox="0 0 12 11"><g fill="none" stroke="#86868c" stroke-linejoin="round" stroke-linecap="round"><rect x="1" y="0.9" width="5.6" height="8.5" rx="0.9" stroke-width="1.1"/><path d="M1.4 2.6 H6.2" stroke-width="0.9"/><rect x="2.3" y="4.2" width="3" height="3.2" stroke-width="0.85"/><path d="M7.6 1.8 Q10.6 3.6 10.2 6.4 Q9.9 7.9 8.4 8" stroke-width="1.25"/></g><rect x="3.3" y="5.3" width="1" height="1" fill="#86868c"/></svg>
<div class="abs" style="left:225.00px;top:255.60px;width:86.00px;height:15.00px;background:#cdf8ee;border:1px solid #76e8d2;border-radius:3px"></div>
<div class="t" style="left:231.70px;top:257.85px;font-size:8.7px;line-height:10.88px;color:#1f8470;-webkit-text-stroke:0.35px #1f8470">SetChargingProfile</div>
<div class="t" style="left:399.70px;top:261.97px;font-size:9.6px;line-height:12.0px;color:#232327;-webkit-text-stroke:0.12px #232327">Drammen #12</div>
<div class="abs" style="left:573.00px;top:253.40px;display:flex;gap:5.9px;height:17.2px"><div class="cid">Call ID&nbsp;<b><span style="letter-spacing:-0.57px">2293922593149111</span></b><svg class="cp" viewBox="0 0 8 8"><g fill="none" stroke="#5c5c62" stroke-width="1.1"><rect x="2.7" y="2.7" width="4.8" height="4.8" rx="1"/><path d="M1.5 5.4 Q0.5 5.4 0.5 4.4 V1.5 Q0.5 0.5 1.5 0.5 H4.4 Q5.4 0.5 5.4 1.5"/></g></svg></div><div class="trx">Transaction 1665688<svg class="sr" viewBox="0 0 8.2 8"><g fill="none" stroke="#b06ee6" stroke-width="1.05" stroke-linecap="round"><circle cx="3.6" cy="3.6" r="3"/><path d="M5.8 5.8 L7.7 7.6"/></g></svg></div><div class="con">Connector <b>3</b></div></div>
<div class="abs" style="left:0.00px;top:314.90px;width:914.00px;height:1.00px;background:#ececee"></div>
<div class="t" style="left:11.40px;top:282.76px;font-size:9.2px;line-height:11.5px;color:#b9b9bd;letter-spacing:-0.02px">23/04/2026</div>
<div class="t" style="left:84.60px;top:282.76px;font-size:9.2px;line-height:11.5px;color:#b9b9bd;letter-spacing:-0.02px">23/04/2026</div>
<div class="t" style="left:399.80px;top:285.39px;font-size:8.45px;line-height:10.56px;color:#9c9ca2">Drammen</div>
<div class="t" style="left:11.50px;top:293.06px;font-size:9.2px;line-height:11.5px;color:#2e2e32;letter-spacing:-0.15px;-webkit-text-stroke:0.28px #2e2e32">09:47:07</div>
<div class="t" style="left:11.60px;top:304.79px;font-size:6.5px;line-height:8.12px;color:#d2d2d6">.196</div>
<div class="t" style="left:84.70px;top:293.06px;font-size:9.2px;line-height:11.5px;color:#2e2e32;letter-spacing:-0.15px;-webkit-text-stroke:0.28px #2e2e32">09:47:07</div>
<div class="t" style="left:84.80px;top:304.79px;font-size:6.5px;line-height:8.12px;color:#d2d2d6">.534</div>
<svg style="left:160.90px;top:291.80px" width="11" height="11" viewBox="0 0 11 11"><g fill="none" stroke="#8a8a8e" stroke-width="1.05"><ellipse cx="5.2" cy="2.2" rx="4.3" ry="1.6"/><path d="M0.9 2.2 V8.4 Q0.9 10 5.2 10 Q9.5 10 9.5 8.4 V2.2"/><path d="M0.9 5.3 Q0.9 6.9 5.2 6.9 Q9.5 6.9 9.5 5.3"/></g></svg>
<svg style="left:177.60px;top:292.70px" width="8" height="8" viewBox="0 0 8 8"><g fill="none" stroke="#cfcfd2" stroke-width="0.9" stroke-linecap="round" stroke-linejoin="round"><path d="M0.6 4 H6.8 M4.2 1.4 L6.8 4 L4.2 6.6"/></g></svg>
<svg style="left:191.20px;top:292.00px" width="12" height="11" viewBox="0 0 12 11"><g fill="none" stroke="#86868c" stroke-linejoin="round" stroke-linecap="round"><rect x="1" y="0.9" width="5.6" height="8.5" rx="0.9" stroke-width="1.1"/><path d="M1.4 2.6 H6.2" stroke-width="0.9"/><rect x="2.3" y="4.2" width="3" height="3.2" stroke-width="0.85"/><path d="M7.6 1.8 Q10.6 3.6 10.2 6.4 Q9.9 7.9 8.4 8" stroke-width="1.25"/></g><rect x="3.3" y="5.3" width="1" height="1" fill="#86868c"/></svg>
<div class="abs" style="left:225.00px;top:290.30px;width:86.00px;height:15.00px;background:#cdf8ee;border:1px solid #76e8d2;border-radius:3px"></div>
<div class="t" style="left:231.70px;top:292.55px;font-size:8.7px;line-height:10.88px;color:#1f8470;-webkit-text-stroke:0.35px #1f8470">SetChargingProfile</div>
<div class="t" style="left:399.70px;top:296.67px;font-size:9.6px;line-height:12.0px;color:#232327;-webkit-text-stroke:0.12px #232327">Drammen #14</div>
<div class="abs" style="left:573.00px;top:288.10px;display:flex;gap:5.9px;height:17.2px"><div class="cid">Call ID&nbsp;<b><span style="letter-spacing:-0.14px">2293922592581580</span></b><svg class="cp" viewBox="0 0 8 8"><g fill="none" stroke="#5c5c62" stroke-width="1.1"><rect x="2.7" y="2.7" width="4.8" height="4.8" rx="1"/><path d="M1.5 5.4 Q0.5 5.4 0.5 4.4 V1.5 Q0.5 0.5 1.5 0.5 H4.4 Q5.4 0.5 5.4 1.5"/></g></svg></div><div class="trx">Transaction 1665529<svg class="sr" viewBox="0 0 8.2 8"><g fill="none" stroke="#b06ee6" stroke-width="1.05" stroke-linecap="round"><circle cx="3.6" cy="3.6" r="3"/><path d="M5.8 5.8 L7.7 7.6"/></g></svg></div><div class="con">Connector <b>4</b></div></div>
<div class="abs" style="left:0.00px;top:349.60px;width:914.00px;height:1.00px;background:#ececee"></div>
<div class="t" style="left:11.40px;top:317.46px;font-size:9.2px;line-height:11.5px;color:#b9b9bd;letter-spacing:-0.02px">23/04/2026</div>
<div class="t" style="left:84.60px;top:317.46px;font-size:9.2px;line-height:11.5px;color:#b9b9bd;letter-spacing:-0.02px">23/04/2026</div>
<div class="t" style="left:399.80px;top:320.09px;font-size:8.45px;line-height:10.56px;color:#9c9ca2">Drammen</div>
<div class="t" style="left:11.50px;top:327.76px;font-size:9.2px;line-height:11.5px;color:#2e2e32;letter-spacing:-0.15px;-webkit-text-stroke:0.28px #2e2e32">09:47:06</div>
<div class="t" style="left:11.60px;top:339.49px;font-size:6.5px;line-height:8.12px;color:#d2d2d6">.873</div>
<div class="t" style="left:84.70px;top:327.76px;font-size:9.2px;line-height:11.5px;color:#2e2e32;letter-spacing:-0.15px;-webkit-text-stroke:0.28px #2e2e32">09:47:07</div>
<div class="t" style="left:84.80px;top:339.49px;font-size:6.5px;line-height:8.12px;color:#d2d2d6">.180</div>
<svg style="left:160.90px;top:326.50px" width="11" height="11" viewBox="0 0 11 11"><g fill="none" stroke="#8a8a8e" stroke-width="1.05"><ellipse cx="5.2" cy="2.2" rx="4.3" ry="1.6"/><path d="M0.9 2.2 V8.4 Q0.9 10 5.2 10 Q9.5 10 9.5 8.4 V2.2"/><path d="M0.9 5.3 Q0.9 6.9 5.2 6.9 Q9.5 6.9 9.5 5.3"/></g></svg>
<svg style="left:177.60px;top:327.40px" width="8" height="8" viewBox="0 0 8 8"><g fill="none" stroke="#cfcfd2" stroke-width="0.9" stroke-linecap="round" stroke-linejoin="round"><path d="M0.6 4 H6.8 M4.2 1.4 L6.8 4 L4.2 6.6"/></g></svg>
<svg style="left:191.20px;top:326.70px" width="12" height="11" viewBox="0 0 12 11"><g fill="none" stroke="#86868c" stroke-linejoin="round" stroke-linecap="round"><rect x="1" y="0.9" width="5.6" height="8.5" rx="0.9" stroke-width="1.1"/><path d="M1.4 2.6 H6.2" stroke-width="0.9"/><rect x="2.3" y="4.2" width="3" height="3.2" stroke-width="0.85"/><path d="M7.6 1.8 Q10.6 3.6 10.2 6.4 Q9.9 7.9 8.4 8" stroke-width="1.25"/></g><rect x="3.3" y="5.3" width="1" height="1" fill="#86868c"/></svg>
<div class="abs" style="left:225.00px;top:325.00px;width:86.00px;height:15.00px;background:#cdf8ee;border:1px solid #76e8d2;border-radius:3px"></div>
<div class="t" style="left:231.70px;top:327.25px;font-size:8.7px;line-height:10.88px;color:#1f8470;-webkit-text-stroke:0.35px #1f8470">SetChargingProfile</div>
<div class="t" style="left:399.70px;top:331.37px;font-size:9.6px;line-height:12.0px;color:#232327;-webkit-text-stroke:0.12px #232327">Drammen #7</div>
<div class="abs" style="left:573.00px;top:322.80px;display:flex;gap:5.9px;height:17.2px"><div class="cid">Call ID&nbsp;<b><span style="letter-spacing:-0.14px">2293922593256517</span></b><svg class="cp" viewBox="0 0 8 8"><g fill="none" stroke="#5c5c62" stroke-width="1.1"><rect x="2.7" y="2.7" width="4.8" height="4.8" rx="1"/><path d="M1.5 5.4 Q0.5 5.4 0.5 4.4 V1.5 Q0.5 0.5 1.5 0.5 H4.4 Q5.4 0.5 5.4 1.5"/></g></svg></div><div class="trx">Transaction 1665621<svg class="sr" viewBox="0 0 8.2 8"><g fill="none" stroke="#b06ee6" stroke-width="1.05" stroke-linecap="round"><circle cx="3.6" cy="3.6" r="3"/><path d="M5.8 5.8 L7.7 7.6"/></g></svg></div><div class="con">Connector <b>2</b></div></div>
<div class="abs" style="left:0.00px;top:384.30px;width:914.00px;height:1.00px;background:#ececee"></div>
<div class="t" style="left:11.40px;top:352.16px;font-size:9.2px;line-height:11.5px;color:#b9b9bd;letter-spacing:-0.02px">23/04/2026</div>
<div class="t" style="left:84.60px;top:352.16px;font-size:9.2px;line-height:11.5px;color:#b9b9bd;letter-spacing:-0.02px">23/04/2026</div>
<div class="t" style="left:399.80px;top:354.79px;font-size:8.45px;line-height:10.56px;color:#9c9ca2">Drammen</div>
<div class="t" style="left:11.50px;top:362.46px;font-size:9.2px;line-height:11.5px;color:#2e2e32;letter-spacing:-0.15px;-webkit-text-stroke:0.28px #2e2e32">09:47:06</div>
<div class="t" style="left:11.60px;top:374.19px;font-size:6.5px;line-height:8.12px;color:#d2d2d6">.869</div>
<div class="t" style="left:84.70px;top:362.46px;font-size:9.2px;line-height:11.5px;color:#2e2e32;letter-spacing:-0.15px;-webkit-text-stroke:0.28px #2e2e32">09:47:07</div>
<div class="t" style="left:84.80px;top:374.19px;font-size:6.5px;line-height:8.12px;color:#d2d2d6">.224</div>
<svg style="left:160.90px;top:361.20px" width="11" height="11" viewBox="0 0 11 11"><g fill="none" stroke="#8a8a8e" stroke-width="1.05"><ellipse cx="5.2" cy="2.2" rx="4.3" ry="1.6"/><path d="M0.9 2.2 V8.4 Q0.9 10 5.2 10 Q9.5 10 9.5 8.4 V2.2"/><path d="M0.9 5.3 Q0.9 6.9 5.2 6.9 Q9.5 6.9 9.5 5.3"/></g></svg>
<svg style="left:177.60px;top:362.10px" width="8" height="8" viewBox="0 0 8 8"><g fill="none" stroke="#cfcfd2" stroke-width="0.9" stroke-linecap="round" stroke-linejoin="round"><path d="M0.6 4 H6.8 M4.2 1.4 L6.8 4 L4.2 6.6"/></g></svg>
<svg style="left:191.20px;top:361.40px" width="12" height="11" viewBox="0 0 12 11"><g fill="none" stroke="#86868c" stroke-linejoin="round" stroke-linecap="round"><rect x="1" y="0.9" width="5.6" height="8.5" rx="0.9" stroke-width="1.1"/><path d="M1.4 2.6 H6.2" stroke-width="0.9"/><rect x="2.3" y="4.2" width="3" height="3.2" stroke-width="0.85"/><path d="M7.6 1.8 Q10.6 3.6 10.2 6.4 Q9.9 7.9 8.4 8" stroke-width="1.25"/></g><rect x="3.3" y="5.3" width="1" height="1" fill="#86868c"/></svg>
<div class="abs" style="left:225.00px;top:359.70px;width:86.00px;height:15.00px;background:#cdf8ee;border:1px solid #76e8d2;border-radius:3px"></div>
<div class="t" style="left:231.70px;top:361.95px;font-size:8.7px;line-height:10.88px;color:#1f8470;-webkit-text-stroke:0.35px #1f8470">SetChargingProfile</div>
<div class="t" style="left:399.70px;top:366.07px;font-size:9.6px;line-height:12.0px;color:#232327;-webkit-text-stroke:0.12px #232327">Drammen #12</div>
<div class="abs" style="left:573.00px;top:357.50px;display:flex;gap:5.9px;height:17.2px"><div class="cid">Call ID&nbsp;<b><span style="letter-spacing:-0.14px">2293922589587415</span></b><svg class="cp" viewBox="0 0 8 8"><g fill="none" stroke="#5c5c62" stroke-width="1.1"><rect x="2.7" y="2.7" width="4.8" height="4.8" rx="1"/><path d="M1.5 5.4 Q0.5 5.4 0.5 4.4 V1.5 Q0.5 0.5 1.5 0.5 H4.4 Q5.4 0.5 5.4 1.5"/></g></svg></div><div class="trx">Transaction 1665540<svg class="sr" viewBox="0 0 8.2 8"><g fill="none" stroke="#b06ee6" stroke-width="1.05" stroke-linecap="round"><circle cx="3.6" cy="3.6" r="3"/><path d="M5.8 5.8 L7.7 7.6"/></g></svg></div><div class="con">Connector <b>1</b></div></div>
<div class="abs" style="left:0.00px;top:419.00px;width:914.00px;height:1.00px;background:#ececee"></div>
<div class="t" style="left:11.40px;top:386.86px;font-size:9.2px;line-height:11.5px;color:#b9b9bd;letter-spacing:-0.02px">23/04/2026</div>
<div class="t" style="left:84.60px;top:386.86px;font-size:9.2px;line-height:11.5px;color:#b9b9bd;letter-spacing:-0.02px">23/04/2026</div>
<div class="t" style="left:399.80px;top:389.49px;font-size:8.45px;line-height:10.56px;color:#9c9ca2">Drammen</div>
<div class="t" style="left:11.50px;top:397.16px;font-size:9.2px;line-height:11.5px;color:#2e2e32;letter-spacing:-0.15px;-webkit-text-stroke:0.28px #2e2e32">09:47:06</div>
<div class="t" style="left:11.60px;top:408.89px;font-size:6.5px;line-height:8.12px;color:#d2d2d6">.868</div>
<div class="t" style="left:84.70px;top:397.16px;font-size:9.2px;line-height:11.5px;color:#2e2e32;letter-spacing:-0.15px;-webkit-text-stroke:0.28px #2e2e32">09:47:07</div>
<div class="t" style="left:84.80px;top:408.89px;font-size:6.5px;line-height:8.12px;color:#d2d2d6">.399</div>
<svg style="left:160.90px;top:395.90px" width="11" height="11" viewBox="0 0 11 11"><g fill="none" stroke="#8a8a8e" stroke-width="1.05"><ellipse cx="5.2" cy="2.2" rx="4.3" ry="1.6"/><path d="M0.9 2.2 V8.4 Q0.9 10 5.2 10 Q9.5 10 9.5 8.4 V2.2"/><path d="M0.9 5.3 Q0.9 6.9 5.2 6.9 Q9.5 6.9 9.5 5.3"/></g></svg>
<svg style="left:177.60px;top:396.80px" width="8" height="8" viewBox="0 0 8 8"><g fill="none" stroke="#cfcfd2" stroke-width="0.9" stroke-linecap="round" stroke-linejoin="round"><path d="M0.6 4 H6.8 M4.2 1.4 L6.8 4 L4.2 6.6"/></g></svg>
<svg style="left:191.20px;top:396.10px" width="12" height="11" viewBox="0 0 12 11"><g fill="none" stroke="#86868c" stroke-linejoin="round" stroke-linecap="round"><rect x="1" y="0.9" width="5.6" height="8.5" rx="0.9" stroke-width="1.1"/><path d="M1.4 2.6 H6.2" stroke-width="0.9"/><rect x="2.3" y="4.2" width="3" height="3.2" stroke-width="0.85"/><path d="M7.6 1.8 Q10.6 3.6 10.2 6.4 Q9.9 7.9 8.4 8" stroke-width="1.25"/></g><rect x="3.3" y="5.3" width="1" height="1" fill="#86868c"/></svg>
<div class="abs" style="left:225.00px;top:394.40px;width:86.00px;height:15.00px;background:#cdf8ee;border:1px solid #76e8d2;border-radius:3px"></div>
<div class="t" style="left:231.70px;top:396.65px;font-size:8.7px;line-height:10.88px;color:#1f8470;-webkit-text-stroke:0.35px #1f8470">SetChargingProfile</div>
<div class="t" style="left:399.70px;top:400.77px;font-size:9.6px;line-height:12.0px;color:#232327;-webkit-text-stroke:0.12px #232327">Drammen #13</div>
<div class="abs" style="left:573.00px;top:392.20px;display:flex;gap:5.9px;height:17.2px"><div class="cid">Call ID&nbsp;<b><span style="letter-spacing:-0.28px">2293922587704911</span></b><svg class="cp" viewBox="0 0 8 8"><g fill="none" stroke="#5c5c62" stroke-width="1.1"><rect x="2.7" y="2.7" width="4.8" height="4.8" rx="1"/><path d="M1.5 5.4 Q0.5 5.4 0.5 4.4 V1.5 Q0.5 0.5 1.5 0.5 H4.4 Q5.4 0.5 5.4 1.5"/></g></svg></div><div class="trx">Transaction 1665438<svg class="sr" viewBox="0 0 8.2 8"><g fill="none" stroke="#b06ee6" stroke-width="1.05" stroke-linecap="round"><circle cx="3.6" cy="3.6" r="3"/><path d="M5.8 5.8 L7.7 7.6"/></g></svg></div><div class="con">Connector <b>2</b></div></div>
<div class="abs" style="left:0.00px;top:453.70px;width:914.00px;height:1.00px;background:#ececee"></div>
<div class="t" style="left:11.40px;top:421.56px;font-size:9.2px;line-height:11.5px;color:#b9b9bd;letter-spacing:-0.02px">23/04/2026</div>
<div class="t" style="left:84.60px;top:421.56px;font-size:9.2px;line-height:11.5px;color:#b9b9bd;letter-spacing:-0.02px">23/04/2026</div>
<div class="t" style="left:399.80px;top:424.19px;font-size:8.45px;line-height:10.56px;color:#9c9ca2">Drammen</div>
<div class="t" style="left:11.50px;top:431.86px;font-size:9.2px;line-height:11.5px;color:#2e2e32;letter-spacing:-0.15px;-webkit-text-stroke:0.28px #2e2e32">09:47:06</div>
<div class="t" style="left:11.60px;top:443.59px;font-size:6.5px;line-height:8.12px;color:#d2d2d6">.868</div>
<div class="t" style="left:84.70px;top:431.86px;font-size:9.2px;line-height:11.5px;color:#2e2e32;letter-spacing:-0.15px;-webkit-text-stroke:0.28px #2e2e32">09:47:07</div>
<div class="t" style="left:84.80px;top:443.59px;font-size:6.5px;line-height:8.12px;color:#d2d2d6">.395</div>
<svg style="left:160.90px;top:430.60px" width="11" height="11" viewBox="0 0 11 11"><g fill="none" stroke="#8a8a8e" stroke-width="1.05"><ellipse cx="5.2" cy="2.2" rx="4.3" ry="1.6"/><path d="M0.9 2.2 V8.4 Q0.9 10 5.2 10 Q9.5 10 9.5 8.4 V2.2"/><path d="M0.9 5.3 Q0.9 6.9 5.2 6.9 Q9.5 6.9 9.5 5.3"/></g></svg>
<svg style="left:177.60px;top:431.50px" width="8" height="8" viewBox="0 0 8 8"><g fill="none" stroke="#cfcfd2" stroke-width="0.9" stroke-linecap="round" stroke-linejoin="round"><path d="M0.6 4 H6.8 M4.2 1.4 L6.8 4 L4.2 6.6"/></g></svg>
<svg style="left:191.20px;top:430.80px" width="12" height="11" viewBox="0 0 12 11"><g fill="none" stroke="#86868c" stroke-linejoin="round" stroke-linecap="round"><rect x="1" y="0.9" width="5.6" height="8.5" rx="0.9" stroke-width="1.1"/><path d="M1.4 2.6 H6.2" stroke-width="0.9"/><rect x="2.3" y="4.2" width="3" height="3.2" stroke-width="0.85"/><path d="M7.6 1.8 Q10.6 3.6 10.2 6.4 Q9.9 7.9 8.4 8" stroke-width="1.25"/></g><rect x="3.3" y="5.3" width="1" height="1" fill="#86868c"/></svg>
<div class="abs" style="left:225.00px;top:429.10px;width:86.00px;height:15.00px;background:#cdf8ee;border:1px solid #76e8d2;border-radius:3px"></div>
<div class="t" style="left:231.70px;top:431.35px;font-size:8.7px;line-height:10.88px;color:#1f8470;-webkit-text-stroke:0.35px #1f8470">SetChargingProfile</div>
<div class="t" style="left:399.70px;top:435.47px;font-size:9.6px;line-height:12.0px;color:#232327;-webkit-text-stroke:0.12px #232327">Drammen #14</div>
<div class="abs" style="left:573.00px;top:426.90px;display:flex;gap:5.9px;height:17.2px"><div class="cid">Call ID&nbsp;<b><span style="letter-spacing:0.00px">2293922588506055</span></b><svg class="cp" viewBox="0 0 8 8"><g fill="none" stroke="#5c5c62" stroke-width="1.1"><rect x="2.7" y="2.7" width="4.8" height="4.8" rx="1"/><path d="M1.5 5.4 Q0.5 5.4 0.5 4.4 V1.5 Q0.5 0.5 1.5 0.5 H4.4 Q5.4 0.5 5.4 1.5"/></g></svg></div><div class="trx">Transaction 1665404<svg class="sr" viewBox="0 0 8.2 8"><g fill="none" stroke="#b06ee6" stroke-width="1.05" stroke-linecap="round"><circle cx="3.6" cy="3.6" r="3"/><path d="M5.8 5.8 L7.7 7.6"/></g></svg></div><div class="con">Connector <b>2</b></div></div>
<div class="abs" style="left:0.00px;top:488.40px;width:914.00px;height:1.00px;background:#ececee"></div>
<div class="t" style="left:11.40px;top:456.26px;font-size:9.2px;line-height:11.5px;color:#b9b9bd;letter-spacing:-0.02px">23/04/2026</div>
<div class="t" style="left:84.60px;top:456.26px;font-size:9.2px;line-height:11.5px;color:#b9b9bd;letter-spacing:-0.02px">23/04/2026</div>
<div class="t" style="left:399.80px;top:458.89px;font-size:8.45px;line-height:10.56px;color:#9c9ca2">Drammen</div>
<div class="t" style="left:11.50px;top:466.56px;font-size:9.2px;line-height:11.5px;color:#2e2e32;letter-spacing:-0.15px;-webkit-text-stroke:0.28px #2e2e32">09:47:06</div>
<div class="t" style="left:11.60px;top:478.29px;font-size:6.5px;line-height:8.12px;color:#d2d2d6">.867</div>
<div class="t" style="left:84.70px;top:466.56px;font-size:9.2px;line-height:11.5px;color:#2e2e32;letter-spacing:-0.15px;-webkit-text-stroke:0.28px #2e2e32">09:47:07</div>
<div class="t" style="left:84.80px;top:478.29px;font-size:6.5px;line-height:8.12px;color:#d2d2d6">.142</div>
<svg style="left:160.90px;top:465.30px" width="11" height="11" viewBox="0 0 11 11"><g fill="none" stroke="#8a8a8e" stroke-width="1.05"><ellipse cx="5.2" cy="2.2" rx="4.3" ry="1.6"/><path d="M0.9 2.2 V8.4 Q0.9 10 5.2 10 Q9.5 10 9.5 8.4 V2.2"/><path d="M0.9 5.3 Q0.9 6.9 5.2 6.9 Q9.5 6.9 9.5 5.3"/></g></svg>
<svg style="left:177.60px;top:466.20px" width="8" height="8" viewBox="0 0 8 8"><g fill="none" stroke="#cfcfd2" stroke-width="0.9" stroke-linecap="round" stroke-linejoin="round"><path d="M0.6 4 H6.8 M4.2 1.4 L6.8 4 L4.2 6.6"/></g></svg>
<svg style="left:191.20px;top:465.50px" width="12" height="11" viewBox="0 0 12 11"><g fill="none" stroke="#86868c" stroke-linejoin="round" stroke-linecap="round"><rect x="1" y="0.9" width="5.6" height="8.5" rx="0.9" stroke-width="1.1"/><path d="M1.4 2.6 H6.2" stroke-width="0.9"/><rect x="2.3" y="4.2" width="3" height="3.2" stroke-width="0.85"/><path d="M7.6 1.8 Q10.6 3.6 10.2 6.4 Q9.9 7.9 8.4 8" stroke-width="1.25"/></g><rect x="3.3" y="5.3" width="1" height="1" fill="#86868c"/></svg>
<div class="abs" style="left:225.00px;top:463.80px;width:86.00px;height:15.00px;background:#cdf8ee;border:1px solid #76e8d2;border-radius:3px"></div>
<div class="t" style="left:231.70px;top:466.05px;font-size:8.7px;line-height:10.88px;color:#1f8470;-webkit-text-stroke:0.35px #1f8470">SetChargingProfile</div>
<div class="t" style="left:399.70px;top:470.17px;font-size:9.6px;line-height:12.0px;color:#232327;-webkit-text-stroke:0.12px #232327">Drammen #9</div>
<div class="abs" style="left:573.00px;top:461.60px;display:flex;gap:5.9px;height:17.2px"><div class="cid">Call ID&nbsp;<b><span style="letter-spacing:0.00px">2293922587435696</span></b><svg class="cp" viewBox="0 0 8 8"><g fill="none" stroke="#5c5c62" stroke-width="1.1"><rect x="2.7" y="2.7" width="4.8" height="4.8" rx="1"/><path d="M1.5 5.4 Q0.5 5.4 0.5 4.4 V1.5 Q0.5 0.5 1.5 0.5 H4.4 Q5.4 0.5 5.4 1.5"/></g></svg></div><div class="trx">Transaction 1665624<svg class="sr" viewBox="0 0 8.2 8"><g fill="none" stroke="#b06ee6" stroke-width="1.05" stroke-linecap="round"><circle cx="3.6" cy="3.6" r="3"/><path d="M5.8 5.8 L7.7 7.6"/></g></svg></div><div class="con">Connector <b>4</b></div></div>
<div class="abs" style="left:0.00px;top:523.10px;width:914.00px;height:1.00px;background:#ececee"></div>
<div class="t" style="left:11.40px;top:490.96px;font-size:9.2px;line-height:11.5px;color:#b9b9bd;letter-spacing:-0.02px">23/04/2026</div>
<div class="t" style="left:84.60px;top:490.96px;font-size:9.2px;line-height:11.5px;color:#b9b9bd;letter-spacing:-0.02px">23/04/2026</div>
<div class="t" style="left:399.80px;top:493.59px;font-size:8.45px;line-height:10.56px;color:#9c9ca2">Drammen</div>
<div class="t" style="left:11.50px;top:501.26px;font-size:9.2px;line-height:11.5px;color:#2e2e32;letter-spacing:-0.15px;-webkit-text-stroke:0.28px #2e2e32">09:47:06</div>
<div class="t" style="left:11.60px;top:512.99px;font-size:6.5px;line-height:8.12px;color:#d2d2d6">.866</div>
<div class="t" style="left:84.70px;top:501.26px;font-size:9.2px;line-height:11.5px;color:#2e2e32;letter-spacing:-0.15px;-webkit-text-stroke:0.28px #2e2e32">09:47:07</div>
<div class="t" style="left:84.80px;top:512.99px;font-size:6.5px;line-height:8.12px;color:#d2d2d6">.363</div>
<svg style="left:160.90px;top:500.00px" width="11" height="11" viewBox="0 0 11 11"><g fill="none" stroke="#8a8a8e" stroke-width="1.05"><ellipse cx="5.2" cy="2.2" rx="4.3" ry="1.6"/><path d="M0.9 2.2 V8.4 Q0.9 10 5.2 10 Q9.5 10 9.5 8.4 V2.2"/><path d="M0.9 5.3 Q0.9 6.9 5.2 6.9 Q9.5 6.9 9.5 5.3"/></g></svg>
<svg style="left:177.60px;top:500.90px" width="8" height="8" viewBox="0 0 8 8"><g fill="none" stroke="#cfcfd2" stroke-width="0.9" stroke-linecap="round" stroke-linejoin="round"><path d="M0.6 4 H6.8 M4.2 1.4 L6.8 4 L4.2 6.6"/></g></svg>
<svg style="left:191.20px;top:500.20px" width="12" height="11" viewBox="0 0 12 11"><g fill="none" stroke="#86868c" stroke-linejoin="round" stroke-linecap="round"><rect x="1" y="0.9" width="5.6" height="8.5" rx="0.9" stroke-width="1.1"/><path d="M1.4 2.6 H6.2" stroke-width="0.9"/><rect x="2.3" y="4.2" width="3" height="3.2" stroke-width="0.85"/><path d="M7.6 1.8 Q10.6 3.6 10.2 6.4 Q9.9 7.9 8.4 8" stroke-width="1.25"/></g><rect x="3.3" y="5.3" width="1" height="1" fill="#86868c"/></svg>
<div class="abs" style="left:225.00px;top:498.50px;width:86.00px;height:15.00px;background:#cdf8ee;border:1px solid #76e8d2;border-radius:3px"></div>
<div class="t" style="left:231.70px;top:500.75px;font-size:8.7px;line-height:10.88px;color:#1f8470;-webkit-text-stroke:0.35px #1f8470">SetChargingProfile</div>
<div class="t" style="left:399.70px;top:504.87px;font-size:9.6px;line-height:12.0px;color:#232327;-webkit-text-stroke:0.12px #232327">Drammen #6</div>
<div class="abs" style="left:573.00px;top:496.30px;display:flex;gap:5.9px;height:17.2px"><div class="cid">Call ID&nbsp;<b><span style="letter-spacing:0.00px">2293922586359737</span></b><svg class="cp" viewBox="0 0 8 8"><g fill="none" stroke="#5c5c62" stroke-width="1.1"><rect x="2.7" y="2.7" width="4.8" height="4.8" rx="1"/><path d="M1.5 5.4 Q0.5 5.4 0.5 4.4 V1.5 Q0.5 0.5 1.5 0.5 H4.4 Q5.4 0.5 5.4 1.5"/></g></svg></div><div class="trx">Transaction 1665450<svg class="sr" viewBox="0 0 8.2 8"><g fill="none" stroke="#b06ee6" stroke-width="1.05" stroke-linecap="round"><circle cx="3.6" cy="3.6" r="3"/><path d="M5.8 5.8 L7.7 7.6"/></g></svg></div><div class="con">Connector <b>3</b></div></div>
<div class="abs" style="left:0.00px;top:557.80px;width:914.00px;height:1.00px;background:#ececee"></div>
<div class="t" style="left:11.40px;top:525.66px;font-size:9.2px;line-height:11.5px;color:#b9b9bd;letter-spacing:-0.02px">23/04/2026</div>
<div class="t" style="left:84.60px;top:525.66px;font-size:9.2px;line-height:11.5px;color:#b9b9bd;letter-spacing:-0.02px">23/04/2026</div>
<div class="t" style="left:399.80px;top:528.29px;font-size:8.45px;line-height:10.56px;color:#9c9ca2">Drammen</div>
<div class="t" style="left:11.50px;top:535.96px;font-size:9.2px;line-height:11.5px;color:#2e2e32;letter-spacing:-0.15px;-webkit-text-stroke:0.28px #2e2e32">09:47:06</div>
<div class="t" style="left:11.60px;top:547.69px;font-size:6.5px;line-height:8.12px;color:#d2d2d6">.866</div>
<div class="t" style="left:84.70px;top:535.96px;font-size:9.2px;line-height:11.5px;color:#2e2e32;letter-spacing:-0.15px;-webkit-text-stroke:0.28px #2e2e32">09:47:07</div>
<div class="t" style="left:84.80px;top:547.69px;font-size:6.5px;line-height:8.12px;color:#d2d2d6">.244</div>
<svg style="left:160.90px;top:534.70px" width="11" height="11" viewBox="0 0 11 11"><g fill="none" stroke="#8a8a8e" stroke-width="1.05"><ellipse cx="5.2" cy="2.2" rx="4.3" ry="1.6"/><path d="M0.9 2.2 V8.4 Q0.9 10 5.2 10 Q9.5 10 9.5 8.4 V2.2"/><path d="M0.9 5.3 Q0.9 6.9 5.2 6.9 Q9.5 6.9 9.5 5.3"/></g></svg>
<svg style="left:177.60px;top:535.60px" width="8" height="8" viewBox="0 0 8 8"><g fill="none" stroke="#cfcfd2" stroke-width="0.9" stroke-linecap="round" stroke-linejoin="round"><path d="M0.6 4 H6.8 M4.2 1.4 L6.8 4 L4.2 6.6"/></g></svg>
<svg style="left:191.20px;top:534.90px" width="12" height="11" viewBox="0 0 12 11"><g fill="none" stroke="#86868c" stroke-linejoin="round" stroke-linecap="round"><rect x="1" y="0.9" width="5.6" height="8.5" rx="0.9" stroke-width="1.1"/><path d="M1.4 2.6 H6.2" stroke-width="0.9"/><rect x="2.3" y="4.2" width="3" height="3.2" stroke-width="0.85"/><path d="M7.6 1.8 Q10.6 3.6 10.2 6.4 Q9.9 7.9 8.4 8" stroke-width="1.25"/></g><rect x="3.3" y="5.3" width="1" height="1" fill="#86868c"/></svg>
<div class="abs" style="left:225.00px;top:533.20px;width:86.00px;height:15.00px;background:#cdf8ee;border:1px solid #76e8d2;border-radius:3px"></div>
<div class="t" style="left:231.70px;top:535.45px;font-size:8.7px;line-height:10.88px;color:#1f8470;-webkit-text-stroke:0.35px #1f8470">SetChargingProfile</div>
<div class="t" style="left:399.70px;top:539.57px;font-size:9.6px;line-height:12.0px;color:#232327;-webkit-text-stroke:0.12px #232327">Drammen #11</div>
<div class="abs" style="left:573.00px;top:531.00px;display:flex;gap:5.9px;height:17.2px"><div class="cid">Call ID&nbsp;<b><span style="letter-spacing:-0.28px">2293922586449141</span></b><svg class="cp" viewBox="0 0 8 8"><g fill="none" stroke="#5c5c62" stroke-width="1.1"><rect x="2.7" y="2.7" width="4.8" height="4.8" rx="1"/><path d="M1.5 5.4 Q0.5 5.4 0.5 4.4 V1.5 Q0.5 0.5 1.5 0.5 H4.4 Q5.4 0.5 5.4 1.5"/></g></svg></div><div class="trx">Transaction 1665449<svg class="sr" viewBox="0 0 8.2 8"><g fill="none" stroke="#b06ee6" stroke-width="1.05" stroke-linecap="round"><circle cx="3.6" cy="3.6" r="3"/><path d="M5.8 5.8 L7.7 7.6"/></g></svg></div><div class="con">Connector <b>4</b></div></div>
<div class="t" style="left:11.40px;top:560.36px;font-size:9.2px;line-height:11.5px;color:#b9b9bd;letter-spacing:-0.02px">23/04/2026</div>
<div class="t" style="left:84.60px;top:560.36px;font-size:9.2px;line-height:11.5px;color:#b9b9bd;letter-spacing:-0.02px">23/04/2026</div>
<div class="t" style="left:399.80px;top:562.99px;font-size:8.45px;line-height:10.56px;color:#9c9ca2">Drammen</div>
<div class="abs" style="left:225.60px;top:568.00px;width:81.50px;height:15.00px;background:#def3fd;border:1px solid #a8dff8;border-radius:3px"></div>
<div class="abs" style="left:573.40px;top:566.70px;width:85.00px;height:17.00px;background:#fff;border:1px solid #e8e8ea;border-radius:3px"></div>
<div class="abs" style="left:664.30px;top:566.70px;width:54.00px;height:17.00px;background:#f8f8f9;border:1px solid #e8e8ea;border-radius:3px"></div>
</div>
<div class="abs" style="left:110.00px;top:85.00px;width:914.00px;height:1.00px;background:#f0f0f2"></div>
<div class="abs" style="left:110.00px;top:85.00px;width:1.00px;height:569.00px;background:#eeeef0"></div>
</body></html>
